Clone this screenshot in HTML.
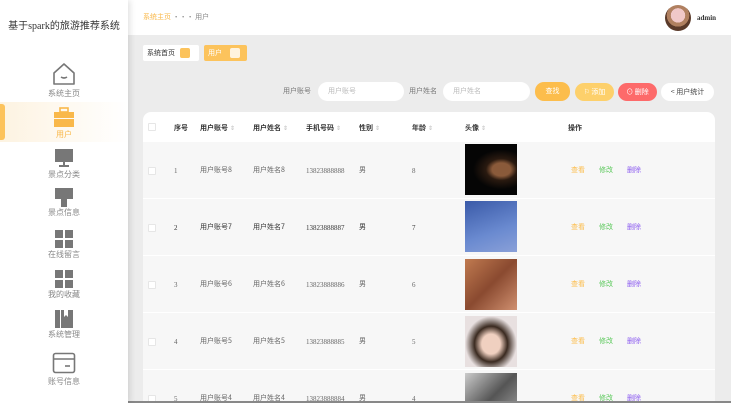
<!DOCTYPE html><html style="width:731px;height:403px;overflow:hidden"><head><meta charset="utf-8"><style>
*{margin:0;padding:0;box-sizing:border-box}
body{width:731px;height:403px;overflow:hidden;background:#ececec;font-family:"Liberation Serif","Noto Sans CJK SC",sans-serif;font-size:8px;color:#555;position:relative}
.side{position:absolute;left:0;top:0;width:128px;height:403px;background:#fff;box-shadow:2px 0 6px rgba(0,0,0,.12);z-index:2}
.title{position:absolute;top:17px;left:0;width:128px;text-align:center;font-size:10px;color:#333}
.item{position:absolute;left:0;width:128px;text-align:center;font-size:8px;color:#888;font-family:"Noto Sans CJK SC",sans-serif}
.item svg{display:block;margin:0 auto}
.hdr{position:absolute;left:128px;top:0;right:0;height:35px;background:#fff}
.abs{position:absolute}
.cjk{font-family:"Noto Sans CJK SC",sans-serif}
.inp{position:absolute;height:19px;background:#fff;border-radius:10px;color:#bbb;font-size:7px;padding:4px 0 0 10px;font-family:"Noto Sans CJK SC",sans-serif}
.btn{position:absolute;height:18px;border-radius:9px;color:#fff;font-size:7px;text-align:center;line-height:18px;font-family:"Noto Sans CJK SC",sans-serif}
.card{position:absolute;left:143px;top:112px;width:572px;height:291px;background:#fff;border-radius:8px 8px 0 0;overflow:hidden}
.row{position:absolute;left:0;width:572px;height:56px;background:#f7f7f7}
.c{position:absolute;font-size:7px;color:#666}
.cb{position:absolute;left:5px;width:8px;height:8px;background:#fff;border:1px solid #e6e6e6;border-radius:1px}
.th{position:absolute;top:11px;font-size:7px;font-weight:bold;color:#333;font-family:"Noto Sans CJK SC",sans-serif}
.th i{font-style:normal;color:#bbb;font-weight:normal;font-size:6px;margin-left:2px}
.av{position:absolute;left:322px;width:52px;height:51px}
</style></head><body>
<div class="side">
<div class="title">基于spark的旅游推荐系统</div>
<div class="item" style="top:62px"><svg width="24" height="24" viewBox="0 0 24 24"><path d="M2 11 L12 2 L22 11 V22 H2 Z" fill="none" stroke="#777" stroke-width="1.6" stroke-linejoin="round"/><path d="M9 15 Q12 17 15 15" fill="none" stroke="#777" stroke-width="1.6"/></svg><div style="margin-top:2px">系统主页</div></div>
<div style="position:absolute;top:102px;left:0;width:128px;height:40px;background:linear-gradient(90deg,#fdf3e1,#fff)"></div>
<div style="position:absolute;top:104px;left:0;width:5px;height:36px;background:#fcc35c;border-radius:0 3px 3px 0"></div>
<div class="item" style="top:107px;color:#f9b84a"><svg width="22" height="20" viewBox="0 0 22 20"><rect x="7" y="1" width="8" height="4" fill="none" stroke="#f9b84a" stroke-width="1.6"/><rect x="1" y="5" width="20" height="6" fill="#f9b84a"/><rect x="1" y="12" width="20" height="8" fill="#f9b84a"/></svg><div style="margin-top:2px">用户</div></div>
<div class="item" style="top:148px"><svg width="20" height="20" viewBox="0 0 20 20"><rect x="1" y="1" width="18" height="13" fill="#777"/><rect x="9" y="14" width="2" height="3" fill="#777"/><rect x="5" y="17" width="10" height="2" fill="#777"/></svg><div style="margin-top:1px">景点分类</div></div>
<div class="item" style="top:188px"><svg width="20" height="20" viewBox="0 0 20 20"><rect x="1" y="0" width="18" height="11" fill="#777"/><rect x="7" y="11" width="6" height="8" fill="#777"/></svg><div style="margin-top:-1px">景点信息</div></div>
<div class="item" style="top:229px"><svg width="20" height="20" viewBox="0 0 20 20"><rect x="1" y="1" width="8" height="8" fill="#777"/><rect x="11" y="1" width="8" height="8" fill="#777"/><rect x="1" y="11" width="8" height="8" fill="#777"/><rect x="11" y="11" width="8" height="8" fill="#777"/></svg><div style="margin-top:0">在线留言</div></div>
<div class="item" style="top:269px"><svg width="20" height="20" viewBox="0 0 20 20"><rect x="1" y="1" width="8" height="8" fill="#777"/><rect x="11" y="1" width="8" height="8" fill="#777"/><rect x="1" y="11" width="8" height="8" fill="#777"/><rect x="11" y="11" width="8" height="8" fill="#777"/></svg><div style="margin-top:0">我的收藏</div></div>
<div class="item" style="top:309px"><svg width="20" height="20" viewBox="0 0 20 20"><rect x="1" y="1" width="5" height="18" fill="#777"/><path d="M7 1 H10 V8 L12 6 L14 8 V1 H19 V19 H7 Z" fill="#777"/></svg><div style="margin-top:0">系统管理</div></div>
<div class="item" style="top:352px"><svg width="24" height="22" viewBox="0 0 24 22"><rect x="1.5" y="1.5" width="21" height="19" rx="2" fill="none" stroke="#777" stroke-width="1.6"/><line x1="1.5" y1="7" x2="22.5" y2="7" stroke="#777" stroke-width="1.6"/><line x1="13" y1="14" x2="18" y2="14" stroke="#777" stroke-width="1.6"/></svg><div style="margin-top:2px">账号信息</div></div>
</div>
<div class="hdr">
<div class="abs cjk" style="left:15px;top:12px;font-size:7px;color:#f9b84a">系统主页 <span style="color:#888">··· 用户</span></div>
<div class="abs" style="left:537px;top:5px;width:26px;height:26px;border-radius:50%;background:radial-gradient(circle at 50% 40%,#f0c8c8 0 35%,#b08060 36% 55%,#5a3a2a 56%)"></div>
<div class="abs" style="left:569px;top:14px;font-size:7px;font-weight:bold;color:#333">admin</div>
</div>
<div class="abs cjk" style="left:143px;top:45px;width:56px;height:16px;background:#fff;border-radius:2px;font-size:7px;color:#333;padding:3px 0 0 4px">系统首页<span style="position:absolute;left:37px;top:3px;width:10px;height:10px;background:#fcc35c;border-radius:2px"></span></div>
<div class="abs cjk" style="left:204px;top:45px;width:43px;height:16px;background:#fcc35c;border-radius:2px;font-size:7px;color:#fff;padding:3px 0 0 4px">用户<span style="position:absolute;left:26px;top:3px;width:10px;height:10px;background:#fff;border-radius:2px;opacity:.8"></span></div>
<div class="abs cjk" style="left:283px;top:86px;font-size:7px;color:#777">用户账号</div>
<div class="inp" style="left:318px;top:82px;width:86px">用户账号</div>
<div class="abs cjk" style="left:409px;top:86px;font-size:7px;color:#777">用户姓名</div>
<div class="inp" style="left:443px;top:82px;width:87px">用户姓名</div>
<div class="btn" style="left:535px;top:82px;width:35px;height:19px;background:#fcbd4c">查找</div>
<div class="btn" style="left:575px;top:83px;width:39px;background:#fdd06b">⚐ 添加</div>
<div class="btn" style="left:618px;top:83px;width:39px;background:#fd6a6a">⊙ 删除</div>
<div class="btn" style="left:661px;top:83px;width:53px;background:#fff;color:#444">&lt; 用户统计</div>
<div class="card">
<div class="cb" style="top:11px;left:5px"></div>
<div class="th" style="left:31px">序号</div>
<div class="th" style="left:57px">用户账号<i>⇕</i></div>
<div class="th" style="left:110px">用户姓名<i>⇕</i></div>
<div class="th" style="left:163px">手机号码<i>⇕</i></div>
<div class="th" style="left:216px">性别<i>⇕</i></div>
<div class="th" style="left:269px">年龄<i>⇕</i></div>
<div class="th" style="left:322px">头像<i>⇕</i></div>
<div class="th" style="left:425px">操作</div>
</div>
<div class="abs" style="left:143px;top:142px;width:572px;height:261px;overflow:hidden">
<div class="row" style="top:0"><div class="cb" style="top:25px"></div><div class="c" style="left:31px;top:25px">1</div><div class="c cjk" style="left:57px;top:23px">用户账号8</div><div class="c cjk" style="left:110px;top:23px">用户姓名8</div><div class="c" style="left:163px;top:25px">13823888888</div><div class="c cjk" style="left:216px;top:23px">男</div><div class="c" style="left:269px;top:25px">8</div><div class="av" style="top:2px;background:radial-gradient(ellipse at 70% 50%,#8a5a3a 0 18%,#2a1a10 30%,#050505 55%)"></div><div class="c cjk" style="left:428px;top:23px;color:#fcbd4c">查看</div><div class="c cjk" style="left:456px;top:23px;color:#5cc95c">修改</div><div class="c cjk" style="left:484px;top:23px;color:#8c5cf0">删除</div></div>
<div class="row" style="top:57px"><div class="cb" style="top:25px"></div><div class="c" style="left:31px;top:25px;color:#333">2</div><div class="c cjk" style="left:57px;top:23px;color:#333">用户账号7</div><div class="c cjk" style="left:110px;top:23px;color:#333">用户姓名7</div><div class="c" style="left:163px;top:25px;color:#333">13823888887</div><div class="c cjk" style="left:216px;top:23px;color:#333">男</div><div class="c" style="left:269px;top:25px;color:#333">7</div><div class="av" style="top:2px;background:linear-gradient(160deg,#3a5aa8,#6a8ad0 60%,#8aa0d8)"></div><div class="c cjk" style="left:428px;top:23px;color:#fcbd4c">查看</div><div class="c cjk" style="left:456px;top:23px;color:#5cc95c">修改</div><div class="c cjk" style="left:484px;top:23px;color:#8c5cf0">删除</div></div>
<div class="row" style="top:114px"><div class="cb" style="top:25px"></div><div class="c" style="left:31px;top:25px">3</div><div class="c cjk" style="left:57px;top:23px">用户账号6</div><div class="c cjk" style="left:110px;top:23px">用户姓名6</div><div class="c" style="left:163px;top:25px">13823888886</div><div class="c cjk" style="left:216px;top:23px">男</div><div class="c" style="left:269px;top:25px">6</div><div class="av" style="top:3px;background:linear-gradient(135deg,#c07a50,#8a4a30 50%,#d09070)"></div><div class="c cjk" style="left:428px;top:23px;color:#fcbd4c">查看</div><div class="c cjk" style="left:456px;top:23px;color:#5cc95c">修改</div><div class="c cjk" style="left:484px;top:23px;color:#8c5cf0">删除</div></div>
<div class="row" style="top:171px"><div class="cb" style="top:25px"></div><div class="c" style="left:31px;top:25px">4</div><div class="c cjk" style="left:57px;top:23px">用户账号5</div><div class="c cjk" style="left:110px;top:23px">用户姓名5</div><div class="c" style="left:163px;top:25px">13823888885</div><div class="c cjk" style="left:216px;top:23px">男</div><div class="c" style="left:269px;top:25px">5</div><div class="av" style="top:3px;background:radial-gradient(ellipse at 50% 55%,#f0d0c0 0 25%,#3a2a20 45%,#e8e0e0 70%)"></div><div class="c cjk" style="left:428px;top:23px;color:#fcbd4c">查看</div><div class="c cjk" style="left:456px;top:23px;color:#5cc95c">修改</div><div class="c cjk" style="left:484px;top:23px;color:#8c5cf0">删除</div></div>
<div class="row" style="top:228px"><div class="cb" style="top:25px"></div><div class="c" style="left:31px;top:25px">5</div><div class="c cjk" style="left:57px;top:23px">用户账号4</div><div class="c cjk" style="left:110px;top:23px">用户姓名4</div><div class="c" style="left:163px;top:25px">13823888884</div><div class="c cjk" style="left:216px;top:23px">男</div><div class="c" style="left:269px;top:25px">4</div><div class="av" style="top:3px;background:linear-gradient(135deg,#ccc,#555 50%,#aaa)"></div><div class="c cjk" style="left:428px;top:23px;color:#fcbd4c">查看</div><div class="c cjk" style="left:456px;top:23px;color:#5cc95c">修改</div><div class="c cjk" style="left:484px;top:23px;color:#8c5cf0">删除</div></div>
</div>
<div class="abs" style="left:0;top:401px;width:731px;height:2px;background:#888"></div>
</body></html>
